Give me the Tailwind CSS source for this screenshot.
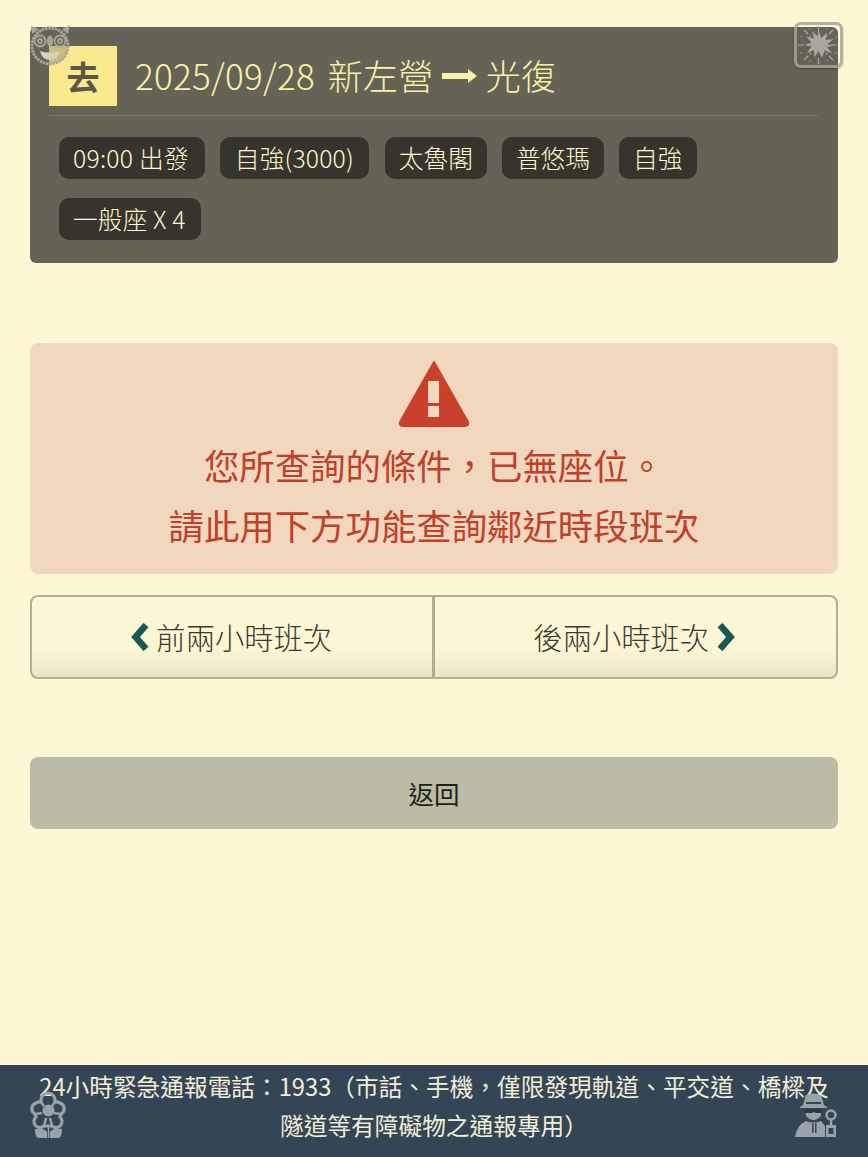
<!DOCTYPE html>
<html lang="zh-Hant">
<head>
<meta charset="utf-8">
<script src="https://cdn.jsdelivr.net/npm/@tailwindcss/browser@4"></script>
</head>
<body class="m-0 bg-[#fdf8d3] font-['Noto_Sans_CJK_TC','Noto_Sans',sans-serif]">
<div class="relative w-[868px] h-[1157px] overflow-hidden flex flex-col">
  <main class="flex-1 px-[30px] pt-[27px]">
    <section class="h-[236px] rounded-[6px] bg-[#656355] pt-[19px] px-[19px]">
      <div class="h-[70px] border-b border-[#7c7a68] mr-[1px] flex items-start">
        <span class="w-[68px] h-[60px] bg-[#fbe98f] text-[#5b5843] text-[33px] font-bold flex items-center justify-center leading-none">去</span>
        <h1 class="ml-[18px] h-[60px] pb-[3px] flex items-center text-[#fbf0a8] text-[35px] font-light leading-none tracking-[0.25px] [word-spacing:5px]">2025/09/28 新左營
          <svg class="ml-[8px] mr-[9px] mt-[3px]" width="35" height="14" viewBox="0 0 35 14"><path d="M0 4h26V0l9 7-9 7v-4H0z" fill="#fbf0a8"/></svg>光復</h1>
      </div>
      <div class="pl-[10px] pt-[21px] flex flex-wrap gap-x-[15px] gap-y-[19px] text-[#fdf7d3] text-[24.700px] font-light leading-none">
        <span class="h-[42px] pb-[2px] pl-[14px] pr-[16px] tracking-[0.25px] rounded-[10px] bg-[#36342c] flex items-center">09:00 出發</span>
        <span class="h-[42px] pb-[2px] px-[15px] mr-[1px] tracking-[0.15px] rounded-[10px] bg-[#36342c] flex items-center">自強(3000)</span>
        <span class="h-[42px] pb-[2px] px-[14px] rounded-[10px] bg-[#36342c] flex items-center">太魯閣</span>
        <span class="h-[42px] pb-[2px] px-[14px] rounded-[10px] bg-[#36342c] flex items-center">普悠瑪</span>
        <span class="h-[42px] pb-[2px] pl-[14px] pr-[15px] rounded-[10px] bg-[#36342c] flex items-center">自強</span>
        <span class="h-[42px] pb-[2px] pl-[14px] pr-[15px] tracking-[0.15px] rounded-[10px] bg-[#36342c] flex items-center">一般座 X 4</span>
      </div>
    </section>

    <section class="mt-[80px] h-[231px] rounded-[8px] bg-[#f0d7bd] flex flex-col items-center text-[#c0402a]">
      <svg class="mt-[16px]" width="74" height="69" viewBox="0 0 74 69">
        <path d="M37 3 L71 63 Q72 67 68 67 L6 67 Q2 67 3 63 Z" fill="#c9412a" stroke="#c9412a" stroke-width="2" stroke-linejoin="round"/>
        <rect x="31" y="22" width="11" height="22" fill="#f0d7bd"/>
        <rect x="31" y="47" width="11" height="11" fill="#f0d7bd"/>
      </svg>
      <p class="mt-[7px] text-[35.400px] font-normal leading-[60px]">您所查詢的條件，已無座位。</p>
      <p class="text-[35.400px] font-normal leading-[60px]">請此用下方功能查詢鄰近時段班次</p>
    </section>

    <div class="mt-[21px] h-[84px] flex rounded-[8px] border-2 border-[#b3ad91] bg-gradient-to-b from-[#fdf7d6] via-[#fcf6d4] via-65% to-[#e9e5c6] text-[#3a3a32] text-[29.300px] font-light leading-none">
      <button class="flex-1 flex items-center justify-center border-r-[3px] border-[#b3ad91]">
        <svg class="mr-[6px]" width="19" height="28" viewBox="0 0 19 28"><path d="M15 2 4.500 14 15 26" fill="none" stroke="#155a55" stroke-width="6.500"/></svg>前兩小時班次</button>
      <button class="flex-1 flex items-center justify-center pr-[2px]">後兩小時班次
        <svg class="ml-[7px]" width="19" height="28" viewBox="0 0 19 28"><path d="M4 2 14.500 14 4 26" fill="none" stroke="#155a55" stroke-width="6.500"/></svg></button>
    </div>

    <button class="mt-[78px] w-full h-[72px] rounded-[8px] bg-[#bcbba6] text-[#1f1f1a] text-[25.500px] flex items-center justify-center leading-none">返回</button>
  </main>

  <footer class="h-[92px] bg-[#344655] text-[#f1eed8] text-[23.700px] font-normal leading-[39px] text-center pt-[2px] px-[38px]">24小時緊急通報電話：1933（市話、手機，僅限發現軌道、平交道、橋樑及隧道等有障礙物之通報專用）</footer>

  <!-- floating mascot: demon face -->
  <svg class="absolute left-[29px] top-[24px]" width="43" height="42" viewBox="0 0 43 42">
    <circle cx="21" cy="22" r="18" fill="#6b6a5e" fill-opacity=".35" stroke="#a9a79a" stroke-width="3" stroke-dasharray="2.500 .8"/>
    <g fill="none" stroke="#a9a79a" stroke-width="1.800">
      <circle cx="11" cy="17" r="5.500"/><circle cx="11" cy="17" r="2"/>
      <circle cx="31" cy="17" r="5.500"/><circle cx="31" cy="17" r="2"/>
    </g>
    <path d="M3 10 2 2l8 3zM39 10l2-9-8 4z" fill="#a9a79a"/>
    <ellipse cx="21" cy="17" rx="3" ry="5.500" fill="#a9a79a"/>
    <path d="M11 27q10 3 20 0-2 9-10 9t-10-9z" fill="#d5d2b8"/>
  </svg>
  <!-- floating mascot: burst -->
  <div class="absolute left-[794px] top-[22px] w-[49px] h-[46px] rounded-[7px] border-[3px] border-[#a5a495]/85 shadow-[0_1px_2px_#00000055] flex items-center justify-center">
    <svg width="41" height="38" viewBox="0 0 41 38">
      <path d="M20.500 4l2.800 8 5.700-5.500-1.500 7.500 8-1-6.500 5.500 7 .5-7 2.500 5.500 6-8-3-2.500 7.500-3.500-7-4 6.500-.5-7.500-7 3 4.500-6.500-7-1.500 7-2.500-5.500-6 8 2-2-7.500 5.500 5z" fill="#a8a8a0"/>
      <g stroke="#a8a8a0" stroke-width="1.200" stroke-dasharray="6 2"><path d="M20.500 0v6M20.500 32v6M0 19h8M33 19h8M6 4l7 7M35 4l-7 7M6 34l7-7M35 34l-7-7"/></g>
      <g fill="#a8a8a0"><circle cx="12" cy="3" r=".7"/><circle cx="29" cy="3" r=".7"/><circle cx="3" cy="11" r=".7"/><circle cx="38" cy="11" r=".7"/><circle cx="3" cy="27" r=".7"/><circle cx="38" cy="27" r=".7"/><circle cx="12" cy="35" r=".7"/><circle cx="29" cy="35" r=".7"/></g>
    </svg>
  </div>
  <!-- floating mascot: flower -->
  <svg class="absolute left-[28px] top-[1090px]" width="41" height="50" viewBox="0 0 41 50">
    <path d="M13 10a7 7 0 0 1 14 0v2a6.500 6.500 0 0 1 5 1 6 6 0 0 1 1 11 7 7 0 0 1-1 3 6 6 0 0 1-8 9h-8a6 6 0 0 1-8-9 7 7 0 0 1-1-3 6 6 0 0 1 1-11 6.500 6.500 0 0 1 5-1z" fill="none" stroke="#9aa3a9" stroke-width="3.200"/>
    <path d="M13 12l3 4M27 12l-3 4M8 24l6-1M32 24l-6-1M16 36l2-8M24 36l-2-8" stroke="#9aa3a9" stroke-width="2.500"/>
    <circle cx="20.500" cy="20.500" r="6" fill="#9aa3a9"/>
    <path d="M7 39q8-2 12 3v6h-8q-4 0-4-9zM34 39q-8-2-12 3v6h8q4 0 4-9z" fill="#9aa3a9"/>
    <path d="M20.500 36v12" stroke="#9aa3a9" stroke-width="1.500"/>
  </svg>
  <!-- floating mascot: detective -->
  <svg class="absolute left-[794px] top-[1092px]" width="46" height="47" viewBox="0 0 46 47">
    <path d="M9 13 12 3q7-3 15 0l3 10 3 2v1H6v-1z" fill="#9aa3a9"/>
    <path d="M12 10h15v2H12z" fill="#344655"/>
    <path d="M12 17h15v7q-7.500 8-15 0z" fill="#9aa3a9"/>
    <path d="M11 17h17v4h-6l-2-1-2 1h-7z" fill="#2c3a47"/>
    <path d="M12 29q7 3 15 0l4 5v11H1q2-12 11-16z" fill="#9aa3a9"/>
    <path d="M18 31h1.500v10H18zM21 31h1.500v10H21z" fill="#344655"/>
    <circle cx="37" cy="23" r="4.500" fill="none" stroke="#9aa3a9" stroke-width="2.500"/>
    <rect x="32" y="33" width="10" height="12" fill="#9aa3a9"/>
    <rect x="34.500" y="36" width="5" height="6" fill="#344655"/>
    <path d="M37 27.500v6" stroke="#9aa3a9" stroke-width="2.500"/>
  </svg>
</div>
</body>
</html>
